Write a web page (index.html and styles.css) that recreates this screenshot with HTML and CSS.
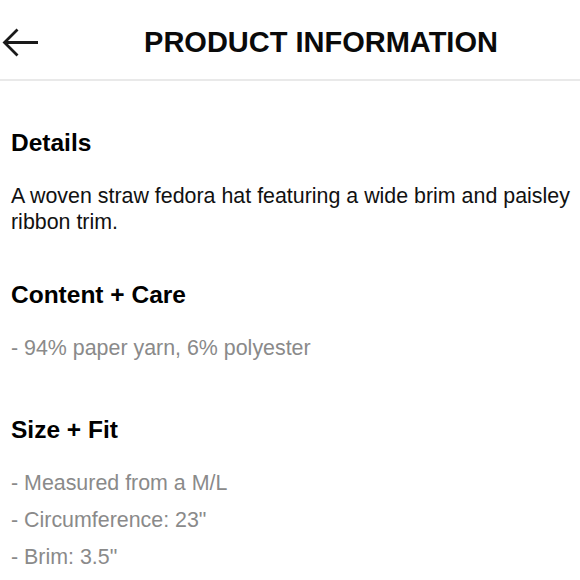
FILE: index.html
```html
<!DOCTYPE html>
<html lang="en">
<head>
<meta charset="utf-8">
<title>Product Information</title>
<link rel="stylesheet" href="styles.css">
</head>
<body>
<header class="topbar">
  <button class="back" aria-label="Back">
    <svg width="40" height="30" viewBox="0 0 40 30" aria-hidden="true">
      <path d="M38 14.5 H4.5 M17.5 1.5 L4.5 14.5 L17.5 27.5" fill="none" stroke="#1a1a1a" stroke-width="2.8"/>
    </svg>
  </button>
  <h1 class="title">PRODUCT INFORMATION</h1>
</header>
<main class="content">
  <section class="section">
    <h2 class="heading">Details</h2>
    <p class="desc">A woven straw fedora hat featuring a wide brim and paisley ribbon trim.</p>
  </section>
  <section class="section">
    <h2 class="heading">Content + Care</h2>
    <ul class="facts">
      <li>- 94% paper yarn, 6% polyester</li>
    </ul>
  </section>
  <section class="section">
    <h2 class="heading">Size + Fit</h2>
    <ul class="facts">
      <li>- Measured from a M/L</li>
      <li>- Circumference: 23"</li>
      <li>- Brim: 3.5"</li>
    </ul>
  </section>
</main>
</body>
</html>
```

FILE: styles.css
```css
html, body {
  margin: 0;
  padding: 0;
  background: #ffffff;
}

body {
  width: 580px;
  font-family: "Liberation Sans", Arial, Helvetica, sans-serif;
  color: #111111;
}

.topbar {
  display: flex;
  align-items: center;
  height: 79px;
  border-bottom: 2px solid #e9e9e9;
}

.back {
  flex: 0 0 62px;
  width: 62px;
  height: 79px;
  margin: 0;
  padding: 6px 0 0;
  border: 0;
  background: none;
  display: flex;
  align-items: center;
  justify-content: flex-start;
  box-sizing: border-box;
}

.back svg {
  display: block;
}

.title {
  flex: 1;
  margin: 0;
  padding-top: 4px;
  text-align: center;
  font-size: 29px;
  line-height: 30px;
  font-weight: 700;
  color: #0a0a0a;
}

.content {
  padding: 47px 8px 0 11px;
  display: flex;
  flex-direction: column;
  gap: 45px;
}

.section {
  display: flex;
  flex-direction: column;
  gap: 20px;
}

.heading {
  margin: 0;
  font-size: 24.5px;
  line-height: 30px;
  font-weight: 700;
  color: #000000;
}

.desc {
  margin: 5px 0 0;
  font-size: 21.4px;
  line-height: 26px;
  color: #111111;
}

.facts {
  list-style: none;
  margin: 0;
  padding: 0 0 3px;
  font-size: 21.4px;
  line-height: 37px;
  color: #8a8a8a;
}
```
